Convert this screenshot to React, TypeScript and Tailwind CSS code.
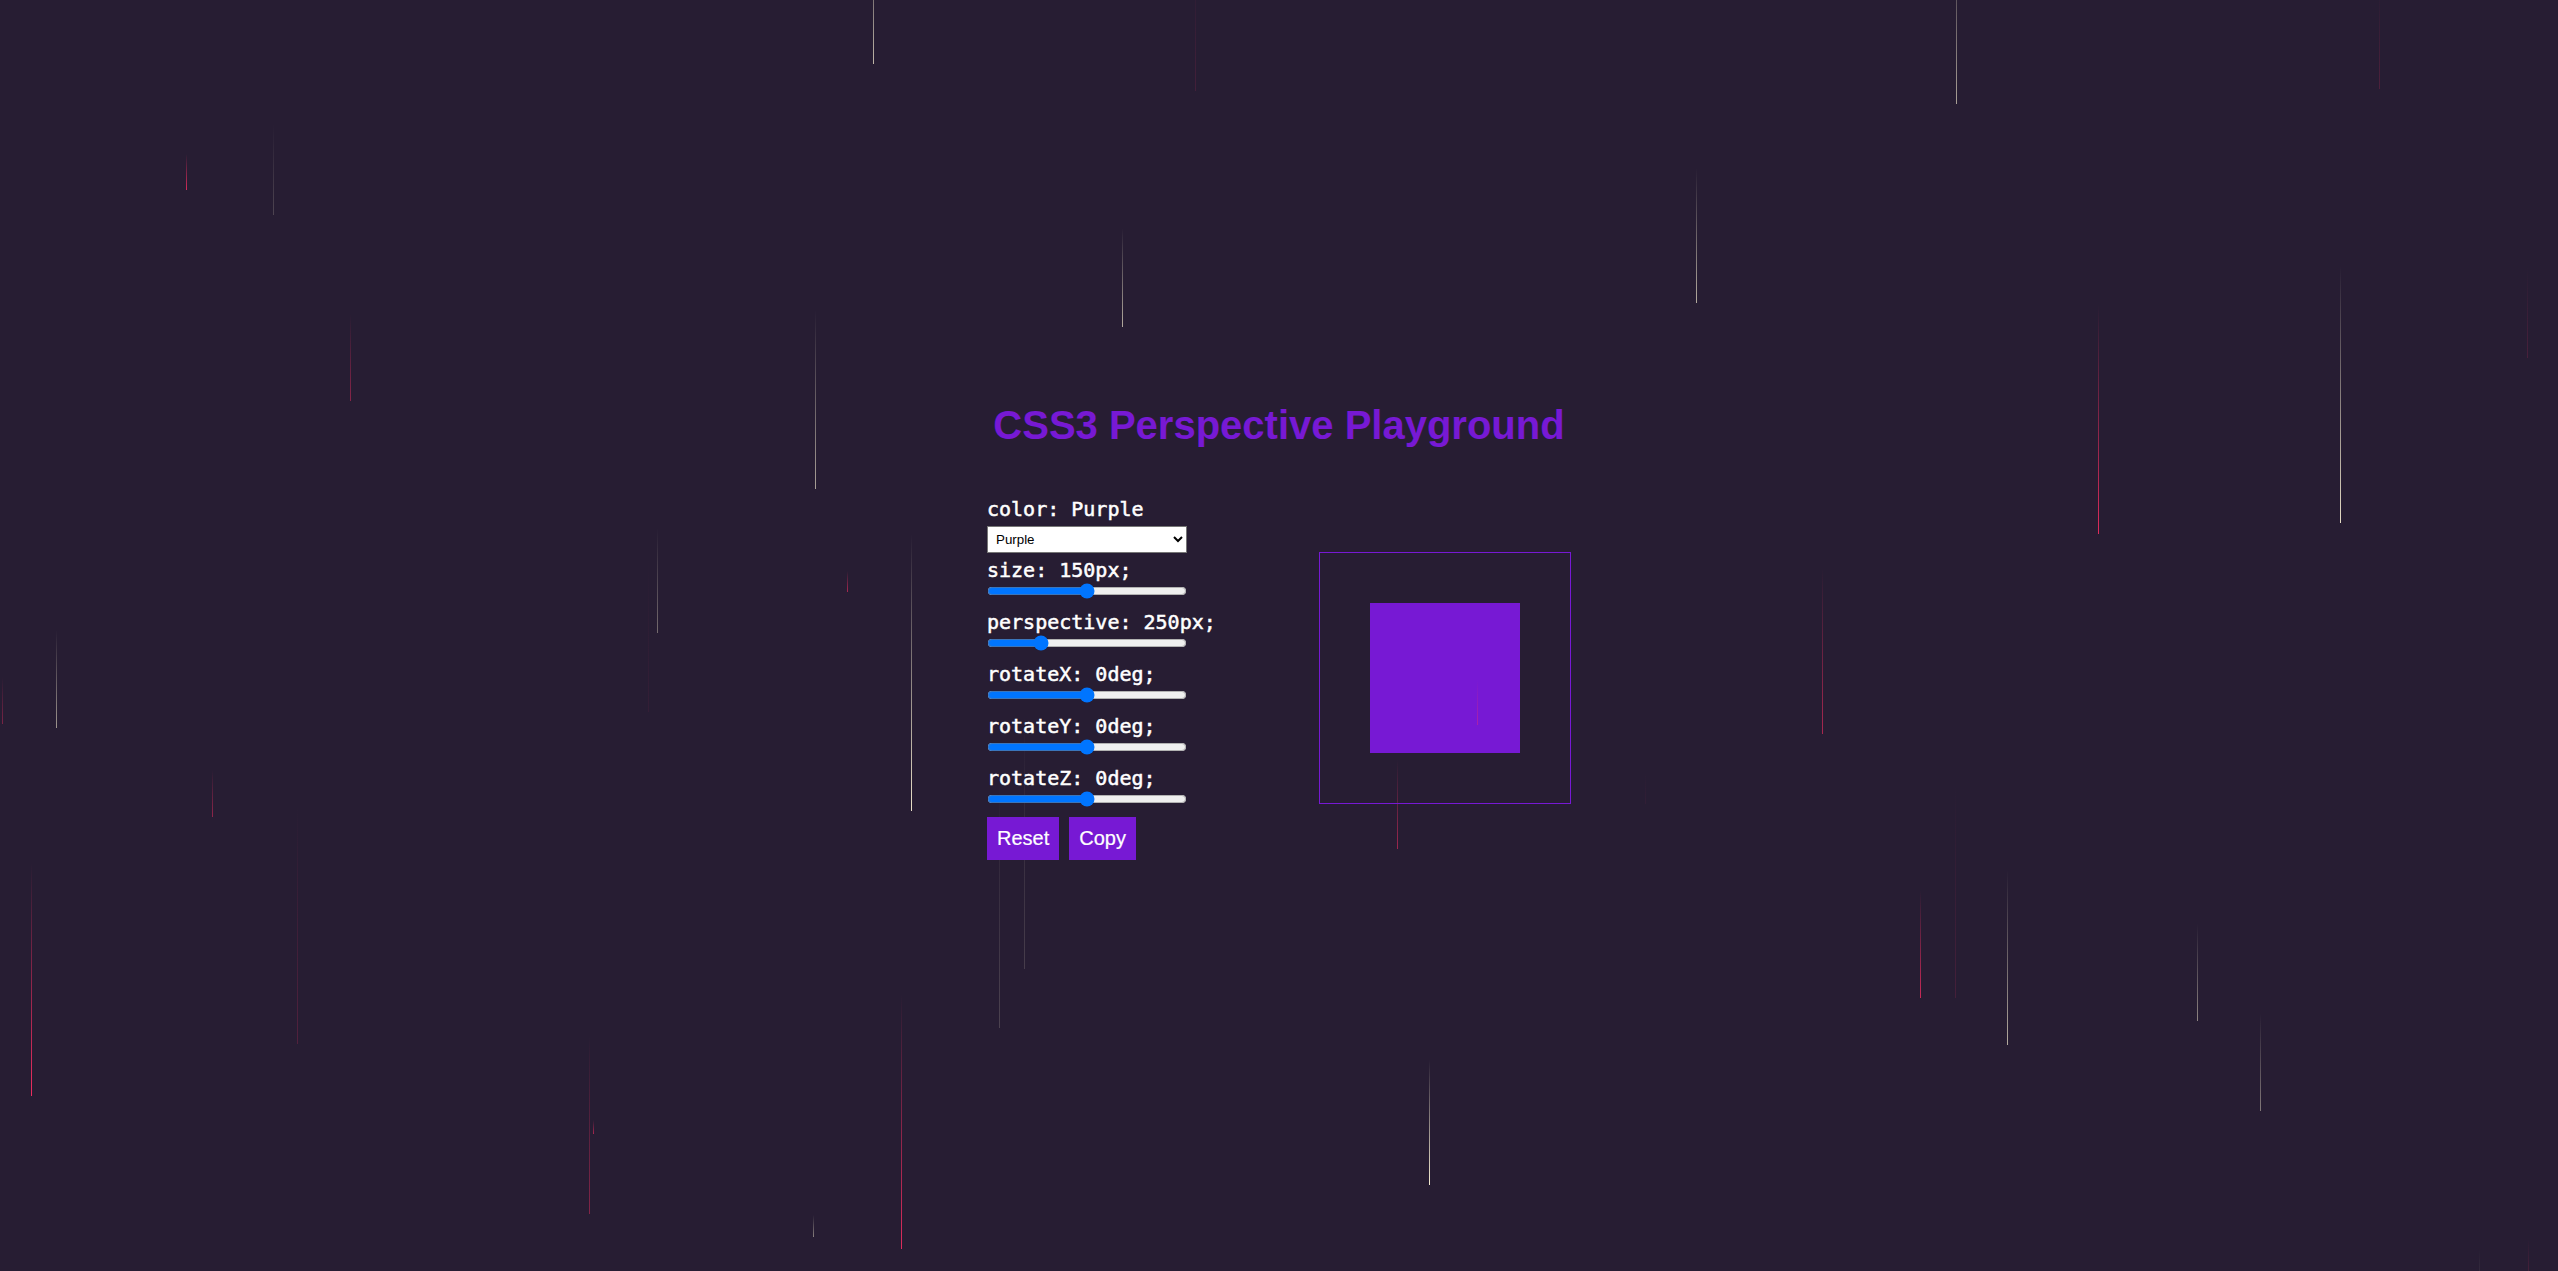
import { useState } from "react";

type Streak = { x: number; top: number; bottom: number; tone: "red" | "cream"; alpha: number };

const backStreaks: Streak[] = [
  { x: 186, top: 154, bottom: 190, tone: "red", alpha: 0.8 },
  { x: 273, top: 124, bottom: 215, tone: "cream", alpha: 0.18 },
  { x: 350, top: 314, bottom: 401, tone: "red", alpha: 0.45 },
  { x: 873, top: -90, bottom: 64, tone: "cream", alpha: 0.7 },
  { x: 1195, top: -40, bottom: 91, tone: "red", alpha: 0.13 },
  { x: 1122, top: 228, bottom: 327, tone: "cream", alpha: 0.65 },
  { x: 815, top: 310, bottom: 489, tone: "cream", alpha: 0.6 },
  { x: 847, top: 571, bottom: 592, tone: "red", alpha: 0.6 },
  { x: 657, top: 528, bottom: 633, tone: "cream", alpha: 0.36 },
  { x: 648, top: 554, bottom: 712, tone: "red", alpha: 0.06 },
  { x: 911, top: 534, bottom: 811, tone: "cream", alpha: 0.9 },
  { x: 1956, top: -80, bottom: 104, tone: "cream", alpha: 0.6 },
  { x: 1696, top: 168, bottom: 303, tone: "cream", alpha: 0.65 },
  { x: 1822, top: 568, bottom: 734, tone: "red", alpha: 0.6 },
  { x: 1645, top: 772, bottom: 804, tone: "red", alpha: 0.05 },
  { x: 1920, top: 890, bottom: 998, tone: "red", alpha: 0.75 },
  { x: 1955, top: 784, bottom: 998, tone: "red", alpha: 0.14 },
  { x: 2007, top: 870, bottom: 1045, tone: "cream", alpha: 0.65 },
  { x: 2379, top: -10, bottom: 89, tone: "red", alpha: 0.18 },
  { x: 2098, top: 304, bottom: 534, tone: "red", alpha: 0.85 },
  { x: 2340, top: 266, bottom: 523, tone: "cream", alpha: 0.88 },
  { x: 2527, top: 267, bottom: 358, tone: "red", alpha: 0.16 },
  { x: 2197, top: 924, bottom: 1021, tone: "cream", alpha: 0.48 },
  { x: 2260, top: 1013, bottom: 1111, tone: "cream", alpha: 0.42 },
  { x: 2479, top: 1250, bottom: 1340, tone: "cream", alpha: 0.25 },
  { x: 2528, top: 1238, bottom: 1320, tone: "red", alpha: 0.35 },
  { x: 2, top: 677, bottom: 724, tone: "red", alpha: 0.38 },
  { x: 56, top: 630, bottom: 728, tone: "cream", alpha: 0.55 },
  { x: 212, top: 770, bottom: 817, tone: "red", alpha: 0.48 },
  { x: 31, top: 863, bottom: 1096, tone: "red", alpha: 0.92 },
  { x: 297, top: 805, bottom: 1044, tone: "red", alpha: 0.2 },
  { x: 589, top: 1036, bottom: 1214, tone: "red", alpha: 0.43 },
  { x: 593, top: 1120, bottom: 1134, tone: "red", alpha: 0.6 },
  { x: 999, top: 784, bottom: 1028, tone: "cream", alpha: 0.17 },
  { x: 1024, top: 714, bottom: 969, tone: "cream", alpha: 0.15 },
  { x: 901, top: 994, bottom: 1249, tone: "red", alpha: 0.85 },
  { x: 813, top: 1215, bottom: 1237, tone: "cream", alpha: 0.45 },
  { x: 1397, top: 760, bottom: 849, tone: "red", alpha: 0.55 },
  { x: 1429, top: 1060, bottom: 1185, tone: "cream", alpha: 0.95 },
];

const frontStreaks: Streak[] = [{ x: 1477, top: 680, bottom: 725, tone: "red", alpha: 0.38 }];

function Rain({ streaks, id }: { streaks: Streak[]; id: string }) {
  return (
    <svg aria-hidden="true" className="pointer-events-none absolute inset-0 h-full w-full">
      <defs>
        <linearGradient id={id + "-red"} x1="0" y1="0" x2="0" y2="1">
          <stop offset="0" stopColor="#ff2e63" stopOpacity="0" />
          <stop offset="1" stopColor="#ff2e63" />
        </linearGradient>
        <linearGradient id={id + "-cream"} x1="0" y1="0" x2="0" y2="1">
          <stop offset="0" stopColor="#fff6d8" stopOpacity="0" />
          <stop offset="1" stopColor="#fff6d8" />
        </linearGradient>
      </defs>
      {streaks.map((s) => (
        <rect
          key={s.x}
          x={s.x}
          y={s.top}
          width={1}
          height={s.bottom - s.top}
          opacity={s.alpha}
          fill={`url(#${id}-${s.tone})`}
        />
      ))}
    </svg>
  );
}

type SliderProps = {
  name: string;
  unit: string;
  min: number;
  max: number;
  value: number;
  onChange: (v: number) => void;
};

function Slider({ name, unit, min, max, value, onChange }: SliderProps) {
  return (
    <label className="flex h-[52px] flex-col">
      <span className="h-[30px] whitespace-pre text-xl leading-[34px]">{`${name}: ${value}${unit};`}</span>
      <input
        type="range"
        min={min}
        max={max}
        value={value}
        onChange={(e) => onChange(Number(e.target.value))}
        className="h-4 w-[200px]"
      />
    </label>
  );
}

const colors: Record<string, string> = { Purple: "#7719d4", Red: "#d41919", Blue: "#1950d4" };
const initial = { size: 150, perspective: 250, x: 0, y: 0, z: 0 };

export default function App() {
  const [color, setColor] = useState("Purple");
  const [v, setV] = useState(initial);
  const hex = colors[color];
  const css = `perspective(${v.perspective}px) rotateX(${v.x}deg) rotateY(${v.y}deg) rotateZ(${v.z}deg)`;
  const turned = v.x !== 0 || v.y !== 0 || v.z !== 0;

  return (
    <div className="relative h-screen w-full overflow-hidden bg-[#271d33] font-['Liberation_Sans',Arial,sans-serif]">
      <Rain streaks={backStreaks} id="back" />
      <main className="relative flex flex-col items-center pt-[402px]">
        <h1 className="h-[46px] text-[40px] leading-[46px] font-bold" style={{ color: hex }}>
          CSS3 Perspective Playground
        </h1>
        <div className="mt-[48px] flex w-[584px] items-start justify-between">
          <section className="w-[240px] font-['DejaVu_Sans_Mono',monospace] text-white [-webkit-text-stroke:0.5px_white]">
            <div className="h-[30px] whitespace-pre text-xl leading-[26px]">{`color: ${color}`}</div>
            <select
              value={color}
              onChange={(e) => setColor(e.target.value)}
              className="block h-[27px] w-[200px] border border-[#767676] bg-white px-1 font-['Liberation_Sans',Arial,sans-serif] text-[13.333px] text-black [-webkit-text-stroke:0]"
            >
              {Object.keys(colors).map((c) => (
                <option key={c}>{c}</option>
              ))}
            </select>
            <Slider name="size" unit="px" min={0} max={300} value={v.size} onChange={(size) => setV({ ...v, size })} />
            <Slider name="perspective" unit="px" min={0} max={1000} value={v.perspective} onChange={(perspective) => setV({ ...v, perspective })} />
            <Slider name="rotateX" unit="deg" min={-180} max={180} value={v.x} onChange={(x) => setV({ ...v, x })} />
            <Slider name="rotateY" unit="deg" min={-180} max={180} value={v.y} onChange={(y) => setV({ ...v, y })} />
            <Slider name="rotateZ" unit="deg" min={-180} max={180} value={v.z} onChange={(z) => setV({ ...v, z })} />
            <div className="mt-1 flex gap-2.5 font-['Liberation_Sans',Arial,sans-serif] text-xl leading-[23px] [-webkit-text-stroke:0.2px_white]">
              <button className="p-2.5" style={{ backgroundColor: hex }} onClick={() => setV(initial)}>
                Reset
              </button>
              <button className="p-2.5" style={{ backgroundColor: hex }} onClick={() => navigator.clipboard?.writeText(`transform: ${css};`)}>
                Copy
              </button>
            </div>
          </section>
          <section className="mt-14 flex h-[252px] w-[252px] items-center justify-center border" style={{ borderColor: hex }}>
            <div style={{ width: v.size, height: v.size, backgroundColor: hex, transform: turned ? css : undefined }} />
          </section>
        </div>
      </main>
      <Rain streaks={frontStreaks} id="front" />
    </div>
  );
}
